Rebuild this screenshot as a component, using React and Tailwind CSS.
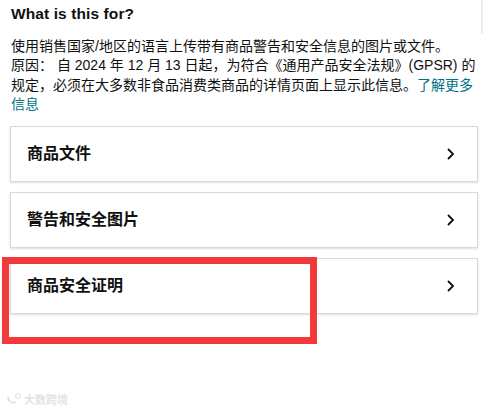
import { ChevronRight } from 'lucide-react';

const cards = ['商品文件', '警告和安全图片', '商品安全证明'];

function Chevron() {
    return (
        <svg width="8" height="12" viewBox="0 0 8 12" className="mr-[22px]">
            <path d="M1.5 1.5 L6 6 L1.5 10.5" fill="none" stroke="#0f1111" strokeWidth="1.8" strokeLinecap="round" />
        </svg>
    );
}

export default function App() {
    return (
        <div className="relative w-[484px] h-[411px] bg-white overflow-hidden text-[#0f1111] font-['Liberation_Sans','Noto_Sans_CJK_SC',sans-serif]">
            {/* faint scrollbar edge */}
            <div className="absolute right-[1px] top-0 w-[2px] h-[34px] bg-[#eeeeee]"></div>

            <div className="pl-[11px] pr-[6px] pt-[4px]">
                <h3 className="text-[15.5px] leading-[20px] font-bold tracking-[0.1px]">What is this for?</h3>
                <p className="mt-[13px] text-[14px] leading-[19.3px] text-[#0f1111]">
                    使用销售国家/地区的语言上传带有商品警告和安全信息的图片或文件。
                    <br />
                    原因： 自 2024 年 12 月 13 日起，为符合《通用产品安全法规》(GPSR) 的规定，必须在大多数非食品消费类商品的详情页面上显示此信息。<span className="text-[#007185]">了解更多信息</span>
                </p>
            </div>

            <div className="mt-[12px] ml-[10px] mr-[6px] flex flex-col gap-[10px]">
                {cards.map((c) => (
                    <div key={c} className="h-[56px] flex items-center justify-between border border-[#d5d9d9] bg-white shadow-[0_1px_2px_rgba(0,0,0,0.13)]">
                        <span className="pl-[16px] text-[16px] font-bold">{c}</span>
                        <Chevron />
                    </div>
                ))}
            </div>

            {/* red annotation box */}
            <div className="absolute left-[2px] top-[257px] w-[315px] h-[87px] border-[7px] border-[#f23a3c]"></div>

            {/* watermark */}
            <div className="absolute left-[6px] top-[393px] flex items-center gap-[2px] text-[#e3e3e3]">
                <svg width="16" height="12" viewBox="0 0 16 12">
                    <path d="M2 3 C2 9 6 11 10 9" fill="none" stroke="#e0e0e0" strokeWidth="1.5" />
                    <circle cx="12" cy="3" r="2.5" fill="none" stroke="#e0e0e0" strokeWidth="1" />
                </svg>
                <span className="text-[11px] leading-[12px] font-bold font-['Noto_Sans_CJK_SC',sans-serif]">大数跨境</span>
            </div>
        </div>
    );
}
